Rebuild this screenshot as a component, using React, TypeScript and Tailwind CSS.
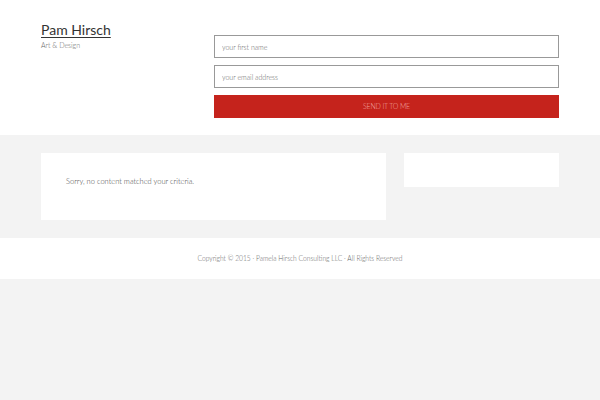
import React from 'react';

export default function App() {
  return (
    <div className="min-h-[400px] bg-[#f3f3f3] font-['Lato','Liberation_Sans',sans-serif] font-light">
      <header className="bg-white h-[135px]">
        <div className="mx-auto w-[518px] flex pt-[21px]">
          <div className="w-[173px]">
            <a href="#" className="block font-normal text-[14px] leading-[18px] text-[#333] underline decoration-1 underline-offset-2">
              Pam Hirsch
            </a>
            <p className="text-[7px] leading-[9px] text-[#666] mt-[2px]">Art &amp; Design</p>
          </div>
          <form className="flex-1 flex flex-col gap-[7px] pt-[14px]">
            <input
              placeholder="your first name"
              className="h-[23px] border border-[#999] bg-white px-[7px] text-[7px] placeholder:text-[#666] outline-none"
            />
            <input
              placeholder="your email address"
              className="h-[23px] border border-[#999] bg-white px-[7px] text-[7px] placeholder:text-[#666] outline-none"
            />
            <button
              type="button"
              className="h-[23px] bg-[#c5231c] text-[#f1a9a5] text-[7px] tracking-tight uppercase"
            >
              Send it to me
            </button>
          </form>
        </div>
      </header>

      <main className="bg-[#f3f3f3] h-[103px] pt-[18px]">
        <div className="mx-auto w-[518px] flex gap-[18px] items-start">
          <div className="w-[345px] h-[67px] bg-white px-[25px] pt-[23px]">
            <p className="text-[7.5px] text-[#444]">Sorry, no content matched your criteria.</p>
          </div>
          <div className="flex-1 h-[34px] bg-white" />
        </div>
      </main>

      <footer className="bg-white h-[41px] flex items-center justify-center">
        <p className="text-[6.7px] text-[#666]">
          Copyright © 2015 · Pamela Hirsch Consulting LLC · All Rights Reserved
        </p>
      </footer>
    </div>
  );
}
